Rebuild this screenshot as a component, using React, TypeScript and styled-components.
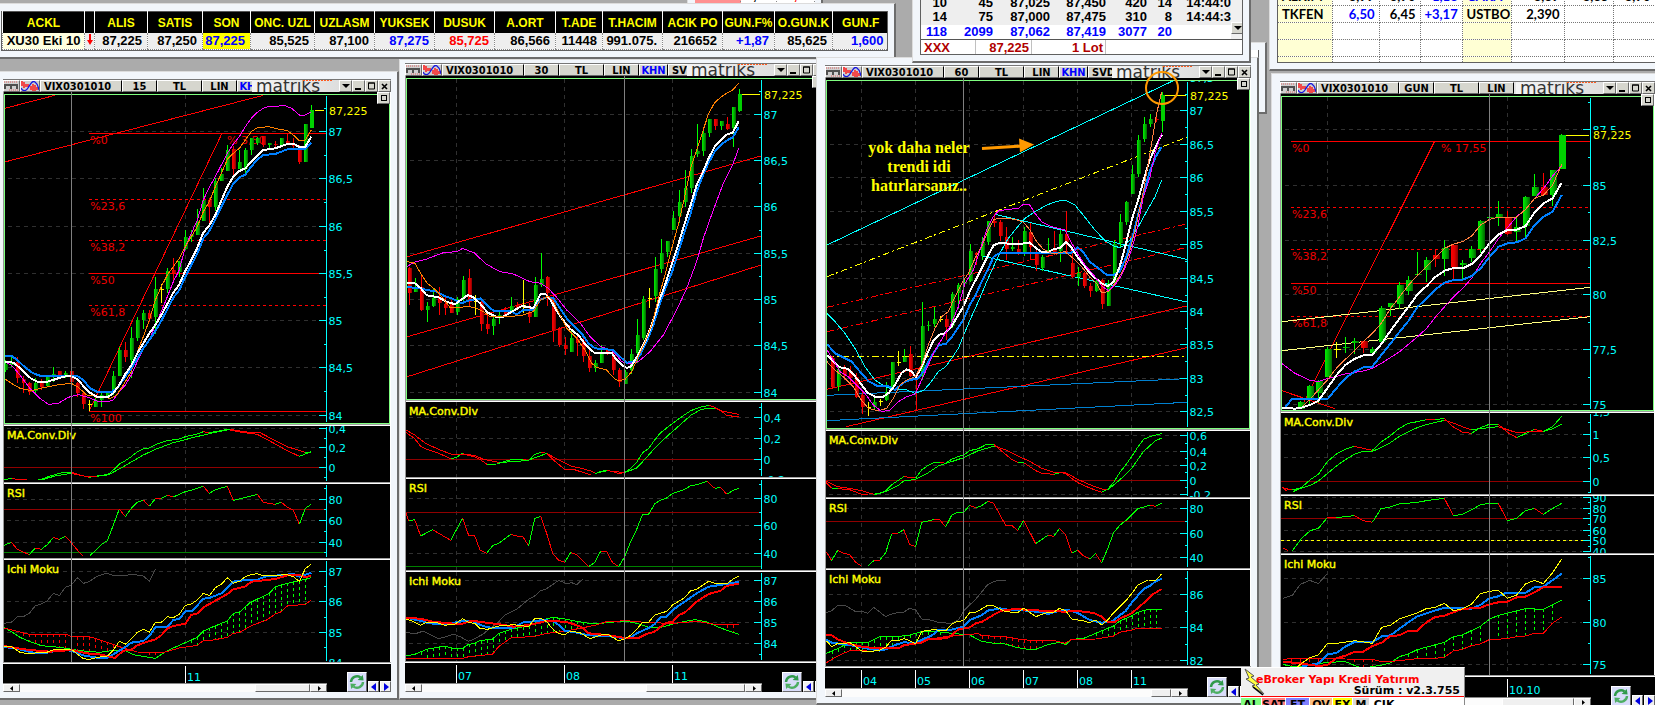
import React from "react";
import styled, { createGlobalStyle, css } from "styled-components";

/* ------------------------------------------------------------------ */
/* Theme values                                                        */
/* ------------------------------------------------------------------ */

const UI_FONT = '"DejaVu Sans Condensed", "DejaVu Sans", sans-serif';
const CHART_FONT = '"DejaVu Sans", sans-serif';
const GRID_FONT = '"Liberation Sans", Arial, sans-serif';

const C = {
  frame: "#f2f6fb",
  desktop: "#ababab",
  up: "#00ff00",
  down: "#ff0000",
  axis: "#00ffff",
  flat: "#ffff00",
};

const GlobalStyle = createGlobalStyle`
  * { box-sizing: border-box; }
  body { margin: 0; background: ${C.desktop}; font-family: ${UI_FONT}; }
`;

/* ------------------------------------------------------------------ */
/* Desktop and windows                                                 */
/* ------------------------------------------------------------------ */

const Desktop = styled.main`
  position: relative;
  min-height: 100vh;
  height: 100vh;
  overflow: hidden;
  background: ${C.desktop};
`;

const Win = styled.section<{ $x: number; $y: number; $w: number; $z: number; $pl?: number; $pt?: number }>`
  position: absolute;
  left: ${(p) => p.$x}px;
  top: ${(p) => p.$y}px;
  width: ${(p) => p.$w}px;
  z-index: ${(p) => p.$z};
  padding: ${(p) => p.$pt ?? 7}px 6px 6px ${(p) => p.$pl ?? 7}px;
  background: ${C.frame};
  border-style: solid;
  border-width: 1px 2px 2px 1px;
  border-color: #dcdcdc #6c6c6c #6c6c6c #dcdcdc;
`;

const Well = styled.div<{ $h?: number }>`
  overflow: hidden;
  height: ${(p) => (p.$h ? `${p.$h}px` : "auto")};
  border: solid #606060;
  border-width: 0 1px 1px 1px;
  background: #fff;
`;

/* ------------------------------------------------------------------ */
/* Price tables                                                        */
/* ------------------------------------------------------------------ */

const TickerTable = styled.table`
  width: 100%;
  table-layout: fixed;
  border-collapse: collapse;
  font-family: ${GRID_FONT};
  font-weight: bold;
  border-top: 1px solid #555;
`;

const TickerHead = styled.th`
  height: 21px;
  padding: 1px 0 0;
  overflow: hidden;
  white-space: nowrap;
  font-size: 12px;
  line-height: 20px;
  color: #ffff00;
  background: #000;
  border-left: 1px solid #fff;
`;

const TickerCell = styled.td<{ $color?: string; $bg?: string; $name?: boolean }>`
  height: 16px;
  padding: 0 ${(p) => (p.$name ? 0 : 5)}px 0 0;
  overflow: hidden;
  white-space: nowrap;
  text-align: ${(p) => (p.$name ? "center" : "right")};
  font-size: 13px;
  line-height: 15px;
  color: ${(p) => p.$color || "#000"};
  background: ${(p) => p.$bg || "#eeeeee"};
  border-left: 1px dotted #888;
  border-bottom: 1px dotted #888;
`;

const TICKER = [
  { h: "ACKL", v: "XU30 Eki 10", w: 82, bg: "#ffffe0", name: true },
  { h: "", v: "", w: 10, arrow: true, name: true },
  { h: "ALIS", v: "87,225", w: 53 },
  { h: "SATIS", v: "87,250", w: 55 },
  { h: "SON", v: "87,225", w: 48, color: "#0000ff", bg: "#ffff00" },
  { h: "ONC. UZL", v: "85,525", w: 64 },
  { h: "UZLASM", v: "87,100", w: 60 },
  { h: "YUKSEK", v: "87,275", w: 60, color: "#0000ff" },
  { h: "DUSUK", v: "85,725", w: 60, color: "#ff0000" },
  { h: "A.ORT", v: "86,566", w: 61 },
  { h: "T.ADE", v: "11448", w: 47 },
  { h: "T.HACIM", v: "991.075.", w: 60 },
  { h: "ACIK PO", v: "216652", w: 60 },
  { h: "GUN.F%", v: "+1,87", w: 52, color: "#0000ff" },
  { h: "O.GUN.K", v: "85,625", w: 58 },
  { h: "GUN.F", v: "1,600", w: 56, color: "#0000ff" },
];

const DownArrow = () => (
  <svg width="8" height="11" viewBox="0 0 8 11" aria-label="down">
    <path d="M3 0h2v6h2l-3 5-3-5h2z" fill="#ff0000" />
  </svg>
);

const DepthTable = styled.table`
  width: 100%;
  table-layout: fixed;
  border-collapse: collapse;
  font: bold 13px/14px ${GRID_FONT};
`;

const DepthRow = styled.tr<{ $total?: boolean }>`
  height: 14px;
  color: ${(p) => (p.$total ? "#0000ff" : "#000")};
  background: ${(p) => (p.$total ? "#fff" : "#eeeeee")};
`;

const DepthCell = styled.td`
  padding: 0;
  overflow: hidden;
  white-space: nowrap;
  text-align: right;
`;

const DepthBody = styled.div`
  display: flex;
  height: 43px;
`;

const DepthScroll = styled.div`
  display: flex;
  align-items: flex-end;
  flex: 0 0 12px;
  padding-bottom: 5px;
  background: #f0f0f0;
`;

const DepthFoot = styled.div`
  display: grid;
  grid-template-columns: 55px 56px 74px 1fr;
  border-top: 1px solid #555;
  height: 15px;
  font: bold 13px/15px ${GRID_FONT};
  color: #b00000;
`;

const DepthFootCell = styled.span<{ $align?: string }>`
  padding: 0 2px 0 3px;
  text-align: ${(p) => p.$align || "left"};
  border-right: 1px solid #c0c0c0;
`;

const DEPTH = [
  ["10", "45", "87,025", "87,450", "420", "14", "14:44:0"],
  ["14", "75", "87,000", "87,475", "310", "8", "14:44:3"],
  ["118", "2099", "87,062", "87,419", "3077", "20", ""],
];
const DEPTH_COLS = [26, 46, 57, 56, 41, 25, 59];

const QuoteTable = styled.table`
  width: 377px;
  table-layout: fixed;
  border-collapse: collapse;
  font: bold 13px/15px Lato, "Open Sans", sans-serif;
`;

const QuoteCell = styled.td<{ $color?: string; $name?: boolean }>`
  height: 17px;
  padding: 1px ${(p) => (p.$name ? 0 : 4)}px 0 4px;
  overflow: hidden;
  white-space: nowrap;
  text-align: ${(p) => (p.$name ? "left" : "right")};
  color: ${(p) => p.$color || "#000"};
  background: ${(p) => (p.$name ? "#ffffd4" : "#fff")};
  border-right: 1px dotted #777;
  border-bottom: 1px dotted #777;
`;

const QUOTES = [
  ["ALKIM", "6,99", "6,90", "+1,18", "GARA", "8,89", "8,85", "8,90"],
  ["TKFEN", "6,50", "6,45", "+3,17", "USTBO", "2,390", "", ""],
  ["", "", "", "", "", "", "", ""],
  ["", "", "", "", "", "", "", ""],
  ["", "", "", "", "", "", "", ""],
];
const QUOTE_COLS = [54, 47, 41, 42, 49, 53, 49, 42];
const quoteColor = (r: number, c: number) =>
  c === 3 || (r === 0 && c === 4) || (r === 1 && c === 1) ? "#0000ff" : "#000";

const SymbolStrip = styled.div`
  display: grid;
  grid-template-columns: 46px 36px 1fr;
  height: 15px;
  font: bold 13px/15px ${GRID_FONT};
  background: #fff;
  text-align: center;
`;

const SymbolCell = styled.span<{ $bg?: string; $color?: string }>`
  background: ${(p) => p.$bg || "#fff"};
  color: ${(p) => p.$color || "#000"};
  border-right: 1px dotted #888;
`;

/* ------------------------------------------------------------------ */
/* Chart window furniture                                              */
/* ------------------------------------------------------------------ */

const raised = css`
  background: #d6d6ce;
  border-style: solid;
  border-width: 1px;
  border-color: #fff #6a6a6a #6a6a6a #fff;
`;

const TitleBar = styled.header`
  display: flex;
  height: 13px;
  border-top: 1px solid #777;
  background: #e4e4e4;
`;

const Tabs = styled.nav`
  display: flex;
  flex: 1 1 0;
  min-width: 0;
  overflow: hidden;
`;

const Tab = styled.button<{ $w: number; $blue?: boolean; $left?: boolean }>`
  ${raised}
  border-right-color: #000;
  flex: 0 0 ${(p) => p.$w}px;
  padding: 0 ${(p) => (p.$left ? 3 : 0)}px;
  overflow: hidden;
  white-space: nowrap;
  text-align: ${(p) => (p.$left ? "left" : "center")};
  font: bold 11px/11px ${UI_FONT};
  color: ${(p) => (p.$blue ? "#0000ff" : "#000")};
`;

const IconTab = styled.button<{ $w: number }>`
  ${raised}
  flex: 0 0 ${(p) => p.$w}px;
  display: flex;
  justify-content: center;
  padding: 0;
  overflow: hidden;
`;

const Logo = styled.div`
  position: relative;
  flex: 0 0 87px;
  height: 12px;
  padding-left: 4px;
  overflow: hidden;
  background: linear-gradient(90deg, #f4f4f4, #dedede);
  font: 17px/12px "DejaVu Sans", sans-serif;
  color: #333;
  white-space: nowrap;

  &::before {
    content: "";
    position: absolute;
    top: 0;
    left: 51px;
    width: 30px;
    height: 1px;
    background: repeating-linear-gradient(90deg, #ff5a1e 0 2px, transparent 2px 3px);
  }
`;

const SysButton = styled.button`
  ${raised}
  flex: 0 0 auto;
  width: 13px;
  height: 12px;
  display: flex;
  align-items: center;
  justify-content: center;
  padding: 0;
`;

const CornerButton = styled(SysButton)`
  position: absolute;
  top: 0;
  right: 0;
  z-index: 2;
`;

const Stack = styled.div`
  position: relative;
  padding-top: 2px;
  background: #000;
  border-left: 1px solid #999;
  border-right: 1px solid #fff;
`;

const Crosshair = styled.div<{ $x: number }>`
  position: absolute;
  top: 0;
  bottom: 0;
  left: ${(p) => p.$x}px;
  width: 1px;
  background: #808080;
`;

const MainPanel = styled.div`
  border: 1px solid #80ff80;
  overflow: hidden;
`;

const SubPanel = styled.figure`
  margin: 0;
  border-top: 1px solid #a0a0a0;
  overflow: hidden;

  &::before {
    content: "";
    display: block;
    height: 1px;
    background: #fff;
  }
`;

const Footer = styled.footer<{ $h: number }>`
  display: flex;
  justify-content: space-between;
  align-items: flex-end;
  height: ${(p) => p.$h}px;
  overflow: hidden;
  background: #000;
`;

const FooterRule = styled.div`
  height: 2px;
  background: #fff;
  border-top: 1px solid #a0a0a0;
`;

const TimeColumn = styled.div<{ $w: number }>`
  width: ${(p) => p.$w}px;
  height: 100%;
`;

const ScrollTrack = styled.div`
  display: flex;
  height: 9px;
  background: #fcfcfc;
  border-top: 1px solid #888;
`;

const ScrollButton = styled.button`
  ${raised}
  flex: 0 0 17px;
  background: #f0f0f0;
  padding: 0;
  display: flex;
  align-items: center;
  justify-content: center;
`;

const Thumb = styled.div<{ $w: number }>`
  ${raised}
  background: #f0f0f0;
  width: ${(p) => p.$w}px;
  margin-left: auto;
`;

const NavButtons = styled.div`
  display: flex;
  align-items: flex-end;
  gap: 1px;
`;

const RefreshButton = styled.button`
  ${raised}
  width: 20px;
  height: 20px;
  padding: 0;
  display: flex;
  align-items: center;
  justify-content: center;
  background: #d8dcfa;
`;

const StepButton = styled.button`
  ${raised}
  width: 11px;
  height: 11px;
  padding: 0;
  display: flex;
  align-items: center;
  justify-content: center;
  background: #f0f0f0;
`;

const Plot = styled.svg`
  display: block;
  shape-rendering: crispEdges;
`;

const HiddenDefs = styled.svg`
  position: absolute;
`;

const AxisText = styled.text<{ $c?: string }>`
  font: 11px ${CHART_FONT};
  fill: ${(p) => p.$c || C.axis};
`;

const TitleText = styled.text`
  font: 11px ${CHART_FONT};
  fill: #ffff00;
  stroke: #ffff00;
  stroke-width: 0.4px;
`;

const Tri = ({ d, color = "#000" }: { d: "l" | "r" | "d"; color?: string }) => {
  const path = { l: "M6 0v8L1 4z", r: "M2 0v8l5-4z", d: "M0 2h8L4 6z" }[d];
  return (
    <svg width="8" height="8" viewBox="0 0 8 8">
      <path d={path} fill={color} />
    </svg>
  );
};

const SmallTri = ({ d }: { d: "l" | "r" }) => (
  <svg width="4" height="5" viewBox="0 0 4 5">
    <path d={d === "l" ? "M3 0v5L0 2.5z" : "M1 0v5l3-2.5z"} fill="#000" />
  </svg>
);

const MIcon = () => (
  <svg width="15" height="10" viewBox="0 0 15 10">
    <rect width="15" height="10" fill="#cfcfcf" />
    <path d="M1 8V4h12v4M7 4v4" fill="none" stroke="#505050" strokeWidth="2" />
    <path d="M0 1h14" stroke="#e06060" strokeDasharray="1 1" />
    <path d="M5 9h9" stroke="#e06060" strokeDasharray="1 1" />
  </svg>
);

const WaveIcon = () => (
  <svg width="18" height="11" viewBox="0 0 18 11">
    <rect width="18" height="11" fill="#cfcfcf" />
    <path d="M1 0v5M3 1v6M5 3v3M7 3v3M10 5v4M12 3v8M14 4v6M16 6v3" stroke="#ff1010" strokeWidth="1.4" />
    <path d="M0 7c2 4 5 3 7 0s4-8 7-6 3 5 4 8" fill="none" stroke="#1414e0" strokeWidth="1.3" />
  </svg>
);

const RefreshIcon = () => (
  <svg width="16" height="16" viewBox="0 0 16 16">
    <path d="M2 8a6 6 0 0 1 9.5-4.6" fill="none" stroke="#2f9a4a" strokeWidth="2.4" />
    <path d="M8.600 6l6 .4-.8-5.400z" fill="#2f9a4a" />
    <path d="M14 8a6 6 0 0 1-9.5 4.6" fill="none" stroke="#4cae62" strokeWidth="2.4" />
    <path d="M7.400 10l-6-.4.8 5.400z" fill="#4cae62" />
  </svg>
);

/* ------------------------------------------------------------------ */
/* Chart model. Series are stored three units to the pixel.            */
/* ------------------------------------------------------------------ */

type Pt = [number, number];
const K = 3;
const parse = (s: string): Pt[] =>
  s
    .trim()
    .split(/\s+/)
    .map((t) => t.split(",").map(Number) as Pt);

const path = (s: string) => "M" + parse(s).map(([x, y]) => `${x / K},${y / K}`).join("L");

const Curve = ({ d, c, w = 1, dash }: { d: string; c: string; w?: number; dash?: string }) => (
  <path d={path(d)} fill="none" stroke={c} strokeWidth={w} strokeDasharray={dash} strokeLinejoin="round" />
);

/* Two-colour line: "g" and "r" switch the pen, "/" lifts it. */
const Trace = ({ d }: { d: string }) => {
  const runs: { c: string; pts: string[] }[] = [];
  let color = C.up;
  let last = "";
  let run: { c: string; pts: string[] } | null = null;
  for (const t of d.trim().split(/\s+/)) {
    if (t === "/") {
      last = "";
      run = null;
    } else if (t === "g" || t === "r") {
      color = t === "g" ? C.up : C.down;
      run = null;
    } else {
      if (!run) {
        run = { c: color, pts: last ? [last] : [] };
        runs.push(run);
      }
      run.pts.push(t);
      last = t;
    }
  }
  return (
    <>
      {runs.map((r, i) => (
        <Curve key={i} d={r.pts.join(" ")} c={r.c} />
      ))}
    </>
  );
};

const valueAt = (pts: Pt[], x: number) => {
  for (let i = 1; i < pts.length; i++) {
    const [x0, y0] = pts[i - 1];
    const [x1, y1] = pts[i];
    if (x >= x0 && x <= x1) return y0 + ((y1 - y0) * (x - x0)) / (x1 - x0);
  }
  return NaN;
};

const Cloud = ({ a, b, end, step }: { a: string; b: string; end: number; step: number }) => {
  const pa = parse(a);
  const pb = parse(b);
  const bars: React.ReactNode[] = [];
  for (let x = end - step; x > pa[0][0]; x -= step) {
    const ya = valueAt(pa, x);
    const yb = valueAt(pb, x);
    if (Math.abs(ya - yb) > 14) {
      bars.push(
        <path
          key={x}
          d={`M${Math.round(x / K) + 0.5},${Math.min(ya, yb) / K}V${Math.max(ya, yb) / K}`}
          stroke={ya < yb ? C.up : C.down}
          strokeDasharray="3 3"
        />
      );
    }
  }
  return (
    <>
      {bars}
      <Curve d={a} c={C.up} />
      <Curve d={b} c={C.down} />
    </>
  );
};

/* One candle per entry: high,top,bottom,low,kind - newest first. */
const Candles = ({ d, end, step, w }: { d: string; end: number; step: number; w: number }) => (
  <>
    {d
      .trim()
      .split(/\s+/)
      .map((t, i) => {
        const [h, a, b, l, k] = t.split(",");
        const x = Math.round((end - i * step) / K);
        const wick = k === "r" ? C.down : k === "y" ? C.flat : C.up;
        const top = Math.round(+a / K);
        const height = Math.max(1, Math.round(+b / K) - top);
        const fill = i === 0 ? "#00d000" : k === "r" ? "url(#down)" : k === "y" ? C.flat : "url(#up)";
        return (
          <g key={i}>
            <path d={`M${x + 0.5},${+h / K}V${+l / K}`} stroke={wick} />
            <rect x={x - Math.floor(w / 2) + 1} y={top} width={w} height={height} fill={fill} />
          </g>
        );
      })}
  </>
);

const Gradients = () => (
  <defs>
    <linearGradient id="up">
      <stop offset="0" stopColor="#00f000" />
      <stop offset="0.5" stopColor="#00b400" />
      <stop offset="1" stopColor="#006400" />
    </linearGradient>
    <linearGradient id="down">
      <stop offset="0" stopColor="#ff0000" />
      <stop offset="0.5" stopColor="#e00000" />
      <stop offset="1" stopColor="#880000" />
    </linearGradient>
  </defs>
);

interface Scale {
  major: [number, string][];
  minor?: number[];
}

interface PlotProps {
  x: number;
  y: number;
  w: number;
  h: number;
  axis: number;
  cols: number[];
  scale: Scale;
  title?: string;
  children?: React.ReactNode;
}

const Panel = ({ x, y, w, h, axis, cols, scale, title, children }: PlotProps) => {
  const ax = Math.round(axis / K) + 0.5;
  const snap = (v: number) => Math.round(v / K) + 0.5;
  return (
    <Plot width={w} height={h} viewBox={`${x} ${y} ${w} ${h}`} role="img" aria-label={title || "Price"}>
      <g stroke="#303030" strokeDasharray="4 4">
        {scale.major.map(([v]) => (
          <path key={v} d={`M${x + 3},${snap(v)}H${ax - 9}`} />
        ))}
        {cols.map((c) => (
          <path key={c} d={`M${snap(c)},${y}V${y + h}`} />
        ))}
      </g>
      {children}
      <g stroke={C.axis}>
        <path d={`M${ax},${y + 1}V${y + h - 1}`} />
        {scale.major.map(([v]) => (
          <path key={v} d={`M${ax - 8},${snap(v)}H${ax}`} />
        ))}
        {(scale.minor || []).map((v) => (
          <path key={v} d={`M${ax - 3},${snap(v)}H${ax}`} />
        ))}
      </g>
      {scale.major.map(([v, t]) => (
        <AxisText key={v} x={ax + 2} y={Math.round(v / K) + 5}>
          {t}
        </AxisText>
      ))}
      {title && (
        <TitleText x={x + 3} y={y + 13}>
          {title}
        </TitleText>
      )}
    </Plot>
  );
};

const Level = ({ y, from, to, c, dash, w = 1 }: { y: number; from: number; to: number; c: string; dash?: string; w?: number }) => (
  <path
    d={`M${from / K},${Math.round(y / K) + (w === 1 ? 0.5 : 0)}H${to / K}`}
    stroke={c}
    strokeWidth={w}
    strokeDasharray={dash}
  />
);

const LastPrice = ({ y, from, axis }: { y: number; from: number; axis: number }) => (
  <Level y={y} from={from} to={axis - 6} c={C.flat} />
);

const PriceTag = ({ x, y }: { x: number; y: number }) => (
  <AxisText x={Math.round(x / K) + 3} y={Math.round(y / K) + 5} $c="#ffff00">
    87,225
  </AxisText>
);

const Fib = ({ x, to, levels }: { x: number; to: number; levels: [number, string, boolean][] }) => (
  <>
    {levels.map(([y, t, dashed]) => (
      <g key={t}>
        <Level y={y} from={x} to={to} c={C.down} dash={dashed ? "3 3" : undefined} />
        <AxisText x={x / K + 1} y={Math.round(y / K) + 11} $c="#f00000">
          {t}
        </AxisText>
      </g>
    ))}
  </>
);

const mids = (a: [number, string][]) => a.slice(1).map(([v], i) => (v + a[i][0]) / 2);

/* ------------------------------------------------------------------ */
/* Chart window                                                        */
/* ------------------------------------------------------------------ */

interface Mark {
  x: number;
  t: string;
}

interface ChartWindowProps {
  x: number;
  y: number;
  w: number;
  z: number;
  pl?: number;
  pt?: number;
  tabs: string[];
  crosshair: number;
  timeW: number;
  timeX: number;
  marks: Mark[];
  thumb: number;
  footH: number;
  main: React.ReactNode;
  subs: React.ReactNode[];
}

const TAB_W = [82, 35, 45, 35, 29, 40];

const ChartWindow = (p: ChartWindowProps) => (
  <Win $x={p.x} $y={p.y} $w={p.w} $z={p.z} $pl={p.pl} $pt={p.pt} aria-label={`VIX0301010 ${p.tabs[0]}`}>
    <TitleBar>
      <Tabs>
        <IconTab $w={17} aria-label="Menu">
          <MIcon />
        </IconTab>
        <IconTab $w={20} aria-label="Indicators">
          <WaveIcon />
        </IconTab>
        {["VIX0301010", ...p.tabs].map((t, i) => (
          <Tab key={t} $w={TAB_W[i]} $left={i === 0 || t === "SVD"} $blue={t === "KHN"}>
            {t}
          </Tab>
        ))}
      </Tabs>
      <Logo>matriks</Logo>
      <SysButton aria-label="Options">
        <Tri d="d" />
      </SysButton>
      <SysButton aria-label="Minimise">
        <svg width="7" height="7">
          <rect y="5" width="6" height="2" />
        </svg>
      </SysButton>
      <SysButton aria-label="Maximise">
        <svg width="7" height="8">
          <path d="M.5 1v6h6V1zM0 1h7" fill="none" stroke="#000" />
        </svg>
      </SysButton>
      <SysButton aria-label="Close">
        <svg width="7" height="7">
          <path d="M1 1l5 5M6 1L1 6" stroke="#000" strokeWidth="1.6" />
        </svg>
      </SysButton>
    </TitleBar>
    <Stack>
      <CornerButton aria-label="Restore panel">
        <svg width="6" height="6">
          <rect x="0.5" y="0.5" width="5" height="5" fill="none" stroke="#000" />
        </svg>
      </CornerButton>
      <MainPanel>{p.main}</MainPanel>
      {p.subs.map((s, i) => (
        <SubPanel key={i}>{s}</SubPanel>
      ))}
      <Crosshair $x={p.crosshair} />
    </Stack>
    <FooterRule />
    <Footer $h={p.footH}>
      <TimeColumn $w={p.timeW}>
        <Plot width={p.timeW} height={p.footH - 9} viewBox={`${p.timeX} 0 ${p.timeW} ${p.footH - 9}`}>
          {p.marks.map((m) => (
            <g key={m.t}>
              <path d={`M${Math.round(m.x / K) + 0.5},2V40`} stroke="#fff" />
              <AxisText x={Math.round(m.x / K) + 2} y={17}>
                {m.t}
              </AxisText>
            </g>
          ))}
        </Plot>
        <ScrollTrack>
          <ScrollButton aria-label="Scroll left">
            <SmallTri d="l" />
          </ScrollButton>
          <Thumb $w={p.thumb} />
          <ScrollButton aria-label="Scroll right">
            <SmallTri d="r" />
          </ScrollButton>
        </ScrollTrack>
      </TimeColumn>
      <NavButtons>
        <RefreshButton aria-label="Refresh">
          <RefreshIcon />
        </RefreshButton>
        <StepButton aria-label="Previous">
          <Tri d="l" color="#0000e0" />
        </StepButton>
        <StepButton aria-label="Next">
          <Tri d="r" color="#0000e0" />
        </StepButton>
      </NavButtons>
    </Footer>
  </Win>
);

/* ------------------------------------------------------------------ */
/* 15 minute chart                                                     */
/* ------------------------------------------------------------------ */

const SCALE_15: [number, string][] = [
  [184, "87"], [325, "86,5"], [467, "86"], [610, "85,5"], [751, "85"], [892, "84,5"], [1034, "84"],
];

const Price15 = () => (
  <Panel x={5} y={25} w={384} h={328} axis={978} cols={[556]} scale={{ major: SCALE_15, minor: [114, ...mids(SCALE_15)] }}>
    <Curve d="14,115 165,76" c={C.down} />
    <Curve d="14,276 790,76" c={C.down} />
    <Fib
      x={268}
      to={978}
      levels={[
        [190, "%0", false], [386, "%23,6", true], [509, "%38,2", true],
        [608, "%50", false], [704, "%61,8", true], [1022, "%100", false],
      ]}
    />
    <Curve d="268,1022 666,190" c={C.down} />
    <AxisText x={227} y={74} $c="#f00000">% 3,50</AxisText>
    <Candles
      end={934}
      step={18}
      w={4}
      d="105,120,175,175,g 162,162,275,275,g 226,230,276,282,r 205,225,228,235,r 190,214,220,222,r 205,205,224,224,g
        212,222,226,230,r 218,220,224,236,g 198,198,226,230,r 200,203,218,225,g 203,205,240,255,g 235,240,297,312,g
        240,276,296,296,g 228,238,298,318,r 225,240,302,302,g 293,312,334,334,g 325,333,410,422,g 385,390,412,460,r
        354,390,452,452,g 417,452,495,495,g 480,492,500,515,g 480,502,537,540,g 572,574,606,620,g 565,600,610,630,r
        595,602,657,670,g 642,656,660,700,y 620,657,741,792,g 720,730,748,755,r 720,729,750,776,g 742,750,804,812,g
        770,804,870,924,g 815,840,862,875,r 832,840,918,918,g 903,918,968,975,g 962,970,984,984,g 968,975,990,1010,g
        985,990,1010,1010,g 990,1002,1004,1022,y 965,968,1003,1016,r 935,940,970,980,r 903,904,935,940,r 904,908,914,925,g
        903,904,918,920,r 892,912,920,937,g 915,920,947,950,g 928,935,950,960,r 925,940,962,973,g 935,940,965,974,r
        918,926,940,968,r 862,876,924,940,r 862,878,884,892,g 870,882,900,905,g"
    />
    <Curve
      c="#ff00ff"
      d="12,875 34,885 60,915 90,955 120,985 145,1003 175,1000 205,982 235,974 265,982 290,993 320,996 340,990 358,965
        376,945 394,915 412,875 430,835 448,810 466,765 484,725 502,680 520,635 538,600 556,530 574,490 592,450 610,390
        628,352 646,320 664,285 682,250 700,222 718,200 736,170 754,145 772,127 790,115 805,109 830,110 850,105 875,115
        898,135 916,135 934,125"
    />
    <Curve
      c="#ff8000"
      d="12,925 34,940 60,955 95,962 120,955 145,950 175,944 214,940 235,952 260,975 295,980 330,985 350,975 370,945
        394,905 412,845 430,800 448,750 466,690 484,650 502,615 520,590 538,565 556,530 574,500 592,470 610,425 628,395
        646,350 664,310 682,268 700,250 718,235 736,210 754,185 772,173 805,170 835,177 862,182 880,195 898,212 916,210 934,180"
    />
    <Curve
      c="#0080ff"
      w={2}
      d="12,857 35,858 52,870 75,892 100,910 120,917 232,918 250,930 270,955 295,967 335,967 355,950 376,920 394,895
        412,865 430,835 448,810 466,783 484,752 502,718 520,683 538,660 556,620 574,585 592,550 610,505 628,483 646,448
        664,410 682,375 700,340 718,322 736,314 754,290 772,268 790,255 826,252 862,238 916,237 934,218"
    />
    <Curve
      c="#ffffff"
      w={2}
      d="12,875 40,878 55,890 75,910 95,927 115,936 140,936 165,928 190,920 214,918 232,928 250,948 270,968 290,980
        322,982 340,970 358,944 376,912 394,886 412,850 430,820 448,790 466,765 484,735 502,702 520,668 538,643 556,602
        574,570 592,533 610,488 628,466 646,435 664,392 682,350 700,320 718,303 736,295 754,275 772,256 790,240 826,235
        862,222 880,221 898,231 916,230 934,200"
    />
    <LastPrice y={121} from={944} axis={978} />
    <PriceTag x={978} y={121} />
  </Panel>
);

const Macd15 = () => (
  <Panel x={4} y={6} w={386} h={56} axis={978} cols={[556]} title="MA.Conv.Div"
    scale={{ major: [[25, "0,4"], [82, "0,2"], [142, "0"]], minor: [54, 112, 172] }}>
    <Level y={142} from={12} to={978} c="#900000" />
    <Trace d="r 12,178 g 20,178 35,175 r 48,178 80,178 / g 115,178 125,178 150,168 190,157 214,157 r 240,165 268,172 g 290,168
      322,165 340,150 358,132 376,122 394,110 412,95 430,86 448,84 466,74 500,62 538,57 556,50 592,42 610,35 r 628,38 g
      646,35 682,28 r 720,36 772,43 826,72 862,92 898,109 g 916,102 934,95" />
    <Trace d="g 130,178 165,168 214,160 r 250,168 290,169 g 330,162 370,140 430,105 466,88 520,68 590,50 650,36 690,28 r
      740,36 780,38 826,62 862,80 916,97 g 934,96" />
  </Panel>
);

const Rsi15 = () => (
  <Panel x={4} y={64} w={386} h={74} axis={978} cols={[556]} title="RSI"
    scale={{ major: [[236, "80"], [301, "60"], [365, "40"]], minor: [203, 268, 333, 397] }}>
    <Level y={268} from={12} to={978} c="#900000" />
    <Level y={397} from={12} to={978} c="#008000" />
    <Trace d="g 12,376 34,367 r 52,388 88,404 g 106,384 r 124,388 g 142,374 160,352 r 178,358 g 196,349 r 214,368 232,390
      248,407 / g 270,407 304,374 322,362 340,315 358,267 r 376,290 g 394,265 412,247 430,240 r 448,259 g 466,236 r
      484,235 g 502,226 r 520,231 g 556,215 574,211 610,199 r 628,220 g 646,209 682,199 r 700,241 g 772,223 r 790,247
      826,253 g 844,247 r 862,262 880,270 898,313 g 916,265 934,253" />
  </Panel>
);

const Ichi15 = () => (
  <Panel x={4} y={140} w={386} h={102} axis={978} cols={[556]} title="Ichi Moku"
    scale={{ major: [[454, "87"], [544, "86"], [637, "85"], [727, "84"]], minor: [499, 592, 682] }}>
    <Curve c="#484848" d="12,610 34,607 52,590 70,590 88,580 106,557 124,552 142,542 160,520 178,527 196,502 214,495
      232,473 250,490 268,485 290,469 320,460 345,468 376,466 400,463 430,468 448,484 466,448" />
    <Cloud end={934} step={18}
      a="12,622 34,635 60,652 90,665 124,677 180,682 240,692 300,697 340,691 376,692 400,704 466,715 502,692 538,676
        592,652 610,633 640,620 682,603 700,580 718,577 750,548 808,520 826,500 862,490 916,478 934,473"
      b="12,624 60,636 88,643 200,643 214,650 268,650 304,661 358,680 412,696 488,698 538,684 592,676 610,662 640,660
        682,652 700,640 718,638 754,617 800,600 826,582 844,575 862,558 916,553 934,540" />
    <Curve c="#0080ff" w={2} d="12,681 50,686 100,698 140,698 180,690 214,692 250,706 290,713 322,714 345,700 370,685 394,668
      430,663 448,648 466,622 502,621 520,600 538,597 556,574 578,572 610,536 628,534 664,520 682,503 700,485 730,481
      772,479 800,468 840,466 880,462 898,470 934,458" />
    <Curve c="#ff0000" w={2} d="12,678 60,686 90,690 150,695 214,690 260,700 304,704 345,714 370,692 394,689 412,676 430,669
      466,658 484,646 502,625 520,618 556,611 574,585 592,580 610,562 650,540 682,522 700,508 736,499 754,485 826,477
      862,466 898,464 916,472 934,466" />
    <Curve c="#ffff00" d="12,678 34,680 60,697 90,702 110,698 140,697 165,688 214,688 232,702 250,716 268,718 304,710
      322,708 340,690 358,664 376,673 394,657 412,637 430,628 448,637 466,607 484,607 502,590 520,593 538,583 556,556
      574,552 592,540 610,520 628,527 646,503 664,493 682,473 700,490 718,484 736,470 754,464 772,461 790,467 826,466
      862,464 880,470 898,484 916,446 934,432" />
  </Panel>
);

/* ------------------------------------------------------------------ */
/* 30 minute chart                                                     */
/* ------------------------------------------------------------------ */

const SCALE_30: [number, string][] = [
  [193, "87"], [331, "86,5"], [469, "86"], [610, "85,5"], [748, "85"], [886, "84,5"], [1025, "84"],
];
const COLS_30 = [169, 493, 817];

const Price30 = () => (
  <Panel x={7} y={29} w={417} h={320} axis={1083} cols={COLS_30} scale={{ major: SCALE_30, minor: [124, ...mids(SCALE_30)] }}>
    <Curve d="22,620 1083,318" c={C.down} />
    <Curve d="22,860 1083,558" c={C.down} />
    <Curve d="22,980 1083,645" c={C.down} />
    <Candles
      end={1016}
      step={18}
      w={4}
      d="118,133,182,185,g 170,172,233,290,g 200,222,236,240,r 212,214,227,240,g 207,208,228,240,r 207,208,248,260,g
        240,250,304,318,g 222,304,312,322,g 298,318,414,428,g 360,414,457,470,g 420,457,498,518,g 484,505,540,540,g
        573,574,607,620,g 567,608,656,670,g 620,657,738,755,g 715,745,747,773,y 738,748,864,870,g 808,856,910,940,g
        898,912,960,972,g 960,965,1002,1002,g 955,960,996,1012,r 908,915,960,975,r 895,900,910,915,r 885,905,938,940,g
        930,938,955,965,g 900,918,955,965,r 860,872,918,935,r 850,868,878,918,r 840,865,905,905,g 860,886,898,915,r
        830,838,886,890,r 735,745,842,875,r 678,680,730,768,r 608,686,705,712,g 680,705,800,800,g 760,785,800,820,r
        690,765,768,790,y 755,765,775,780,r 740,768,780,785,g 770,780,795,800,r 785,795,805,822,g 800,808,828,855,g
        795,822,838,852,r 750,755,822,842,r 735,752,756,795,y 658,685,755,770,r 678,690,745,755,g 742,748,785,795,g
        750,760,788,790,r 735,762,775,795,r 712,742,760,795,r 715,745,768,770,g 755,768,780,815,g 678,710,780,782,r
        685,712,725,725,g 650,655,728,765,r"
    />
    <Curve
      c="#ff00ff"
      d="22,650 40,637 80,627 130,608 170,605 188,595 205,602 222,608 240,625 260,643 300,665 340,672 390,695 422,700
        445,715 470,742 500,780 540,818 570,860 600,888 640,905 665,935 690,942 715,935 750,905 790,855 830,780 860,715
        890,635 910,565 940,480 970,400 998,345 1016,295"
    />
    <Curve
      c="#0080ff"
      w={2}
      d="22,711 60,715 80,720 110,725 134,738 155,745 185,760 204,752 242,745 260,765 280,782 330,783 350,793 370,780
        400,780 420,750 440,742 460,745 480,775 500,805 525,830 548,855 565,880 585,895 640,900 660,920 680,938 705,935
        722,912 740,875 760,825 780,760 800,705 818,660 836,602 854,545 872,490 890,425 908,378 926,338 944,305 962,285
        980,272 998,262 1016,232"
    />
    <Curve
      c="#ffffff"
      w={2}
      d="22,699 44,700 62,714 80,736 116,742 134,753 165,763 185,748 204,735 220,742 240,760 262,787 290,801 310,800
        330,788 365,768 400,774 412,752 422,731 436,731 450,748 470,782 490,812 512,838 535,856 560,888 584,909 635,909
        650,930 665,945 680,954 692,950 705,930 720,905 735,875 755,825 775,760 795,705 818,635 836,580 854,520 872,465
        890,405 908,368 926,325 944,290 962,270 980,254 998,248 1016,214"
    />
    <Curve
      c="#ff8000"
      d="22,635 45,640 62,670 80,698 105,718 130,745 150,773 170,773 200,770 225,772 250,785 270,800 330,800 370,795
        400,785 420,752 445,738 460,755 480,795 500,835 530,865 555,900 575,940 590,952 620,960 640,983 655,993 675,988
        695,965 715,920 735,875 755,825 775,745 795,675 818,585 836,520 854,440 872,355 890,300 908,245 926,190 944,158
        962,142 980,130 998,120 1016,100"
    />
    <LastPrice y={133} from={1026} axis={1086} />
    <PriceTag x={1083} y={133} />
  </Panel>
);

const Macd30 = () => (
  <Panel x={6} y={2} w={419} h={75} axis={1083} cols={COLS_30} title="MA.Conv.Div"
    scale={{ major: [[52, "0,4"], [115, "0,2"], [176, "0"], [238, "-0,2"]], minor: [22, 84, 145, 208] }}>
    <Level y={176} from={18} to={1083} c="#900000" />
    <Trace d="r 18,97 44,116 62,139 80,148 116,160 152,176 g 170,172 188,160 r 206,167 224,170 240,178 262,194 g 290,192
      314,184 340,178 368,178 r 386,182 g 404,163 422,157 r 440,160 458,178 476,193 494,208 520,208 548,217 572,224 / g
      586,222 602,214 622,211 r 656,220 674,218 g 692,205 710,187 728,158 746,145 764,120 782,98 800,84 818,70 854,44
      872,32 900,22 926,16 r 944,22 962,32 980,46 1016,51" />
    <Trace d="r 18,90 44,105 80,132 116,148 152,162 188,163 224,166 250,178 296,187 g 350,185 386,180 420,168 440,160 r
      476,180 512,198 548,206 572,213 586,220 g 622,212 r 674,218 g 710,204 728,185 764,145 800,110 840,75 872,46
      900,30 926,24 944,24 r 962,32 990,38 1016,43" />
  </Panel>
);

const Rsi30 = () => (
  <Panel x={6} y={79} w={419} h={91} axis={1083} cols={COLS_30} title="RSI"
    scale={{ major: [[293, "80"], [376, "60"], [458, "40"]], minor: [253, 335, 418] }}>
    <Level y={335} from={18} to={1083} c="#900000" />
    <Level y={499} from={18} to={1083} c="#008000" />
    <Trace d="r 18,338 26,363 g 44,359 r 62,408 g 98,389 r 152,421 g 188,355 r 206,406 224,407 240,450 260,460 g 278,437
      296,430 332,403 r 350,408 368,409 386,438 g 404,356 422,349 r 440,400 458,460 476,481 494,487 g 512,457 r 530,464
      566,500 g 584,487 602,454 r 620,455 638,488 656,500 g 674,470 692,425 710,388 728,342 746,342 764,312 782,300
      800,294 818,280 854,268 872,257 890,254 922,244 r 944,265 g 962,262 r 980,283 g 998,272 1016,265" />
  </Panel>
);

const Ichi30 = () => (
  <Panel x={6} y={172} w={419} h={89} axis={1083} cols={COLS_30} title="Ichi Moku"
    scale={{ major: [[541, "87"], [604, "86"], [667, "85"], [730, "84"]], minor: [573, 635, 698, 763] }}>
    <Curve c="#484848" d="18,696 44,702 70,693 98,708 116,716 140,710 160,702 180,710 206,724 224,716 250,702 270,685
      290,672 314,645 350,628 386,598 404,588 422,572 440,566 476,541 500,551 515,548 530,554 548,538" />
    <Cloud end={1016} step={18}
      a="18,768 44,763 80,748 134,738 160,745 188,745 206,733 224,730 240,722 278,717 296,700 332,688 386,677 422,661
        458,652 494,657 530,664 566,670 602,670 674,663 710,670 746,682 782,682 820,672 850,665 885,659 920,666 962,684
        1016,703"
      b="18,775 188,775 206,770 240,767 278,762 296,740 332,714 404,709 440,700 494,694 540,685 584,676 620,665
        680,662 746,668 818,670 890,664 944,673 1016,674" />
    <Curve c="#0080ff" w={2} d="18,653 60,662 80,668 110,673 150,670 190,663 220,664 240,674 262,682 300,685 340,683
      370,667 400,664 430,660 458,663 476,675 494,692 530,698 566,706 620,708 670,714 692,712 710,700 746,684 764,672
      782,652 800,650 818,630 854,605 890,580 926,560 960,555 1016,546" />
    <Curve c="#ff0000" w={2} d="18,654 60,656 98,665 160,671 188,671 215,662 250,667 300,673 340,680 386,675 420,668
      440,662 465,664 494,665 520,672 548,683 566,700 620,705 674,714 715,714 740,702 764,695 782,680 800,668 818,666
      836,645 854,638 890,605 926,582 962,572 980,558 1016,551" />
    <Curve c="#ffff00" d="18,657 34,662 62,676 80,666 110,668 134,676 165,672 188,656 206,668 224,670 240,685 262,688
      296,678 340,674 386,680 404,656 422,654 440,665 458,687 476,701 494,704 512,693 540,698 570,716 602,705 625,704
      656,723 676,715 692,706 710,688 728,667 746,667 764,645 800,634 818,615 854,593 872,572 890,568 926,544 944,550
      980,552 998,538 1016,528" />
  </Panel>
);

/* ------------------------------------------------------------------ */
/* 60 minute chart                                                     */
/* ------------------------------------------------------------------ */

const SCALE_60: [number, string][] = [
  [82, "87,5"], [181, "87"], [283, "86,5"], [382, "86"], [484, "85,5"], [583, "85"], [683, "84,5"], [784, "84"],
  [883, "83,5"], [983, "83"], [1084, "82,5"],
];
const COLS_60 = [139, 301, 463, 625, 787, 949];
const DASH_DOT = "7 3 2 3";

const Price60 = () => (
  <Panel x={12} y={31} w={422} h={347} axis={1116} cols={COLS_60} scale={{ major: SCALE_60, minor: mids(SCALE_60) }}>
    <Curve d="36,1018 1115,768" c={C.down} />
    <Curve d="94,1130 1115,893" c={C.down} />
    <Curve d="36,1036 1115,986" c="#0080d0" />
    <Curve d="36,1112 1115,1057" c="#0080d0" />
    <Curve d="36,772 1115,522" c={C.down} dash={DASH_DOT} />
    <Curve d="36,845 1115,592" c={C.down} dash={DASH_DOT} />
    <Curve d="36,680 1115,262" c={C.flat} dash={DASH_DOT} />
    <Level y={918} from={36} to={1115} c={C.flat} dash={DASH_DOT} />
    <Curve d="36,585 1075,92" c={C.axis} />
    <Curve d="536,492 1115,628" c={C.axis} />
    <Curve d="500,618 1115,756" c={C.axis} />
    <Candles
      end={1040}
      step={18}
      w={4}
      d="125,136,212,245,g 190,207,210,215,r 192,208,222,232,g 200,222,266,276,g 255,270,372,380,g 345,373,432,432,g
        453,457,516,526,g 492,517,580,590,g 570,582,696,700,g 690,700,768,768,g 686,690,762,778,r 685,692,722,725,g
        700,708,724,740,r 665,668,708,715,r 650,668,682,708,g 610,640,680,684,r 484,552,575,610,r 540,553,602,636,g
        543,600,605,615,r 565,600,610,612,g 615,622,655,662,g 600,612,645,662,r 520,545,592,630,r 530,543,606,618,g
        570,598,610,614,r 560,592,598,604,g 530,560,596,630,r 510,515,558,572,r 492,514,518,530,r 513,514,576,586,g
        562,576,618,630,g 605,608,615,645,r 582,603,692,695,g 690,697,702,710,g 700,704,730,778,g 726,732,828,835,g
        795,806,832,870,r 798,806,808,815,y 772,806,822,830,g 812,824,828,842,g 756,828,976,990,g 970,975,980,1080,r
        888,912,978,982,r 897,920,935,937,g 903,937,940,948,y 935,937,1012,1015,g 995,1025,1050,1052,g 1048,1052,1055,1068,y
        1040,1055,1070,1080,g 1055,1070,1074,1098,y 1020,1036,1070,1092,r 968,980,1040,1045,r 948,962,985,1000,r
        945,955,975,990,r 950,956,1008,1022,g 918,925,1010,1015,r"
    />
    <Curve
      c="#00ffff"
      d="36,790 60,815 90,850 120,895 150,950 180,990 210,1010 240,1020 270,1018 300,1030 325,1022 345,1000 370,965
        392,950 410,925 430,895 446,855 465,810 490,755 515,695 540,640 560,600 580,565 600,540 630,505 660,485 690,468
        715,457 740,451 755,453 780,465 810,502 840,540 870,572 900,590 915,592 930,585 945,570 970,530 1000,475
        1020,440 1040,390"
    />
    <Curve
      c="#0080ff"
      w={2}
      d="36,882 60,910 90,925 110,935 135,965 160,993 185,1007 220,1008 240,1020 265,998 285,990 310,985 325,965
        340,935 355,910 372,885 392,882 410,862 428,835 446,808 464,765 482,735 500,695 518,660 536,620 554,609 770,608
        788,592 806,608 824,635 850,655 875,674 896,675 914,665 932,625 950,570 968,500 986,430 1004,365 1022,320
        1040,290"
    />
    <Curve
      c="#ffffff"
      w={2}
      d="38,916 60,940 75,952 100,957 115,972 140,1005 158,1028 180,1040 205,1040 222,1028 240,1005 260,968 275,958
        290,964 302,982 318,955 335,915 355,872 372,854 390,850 410,828 430,795 445,770 464,725 482,690 500,655 518,618
        536,586 554,578 600,583 630,580 644,577 660,592 680,606 698,606 716,598 734,594 752,576 770,594 788,622 806,645
        824,668 842,685 860,700 878,709 896,695 914,650 932,585 950,510 968,455 986,390 1004,330 1022,290 1040,255"
    />
    <Curve
      c="#ff8040"
      d="36,935 60,960 90,985 115,1010 135,1045 160,1075 190,1083 215,1075 235,1045 255,1005 275,990 300,980 320,945
        340,885 360,835 380,800 400,785 420,740 440,700 460,670 480,625 500,590 520,540 536,508 560,504 600,508 625,516
        645,540 665,575 685,598 715,612 750,605 775,625 800,650 825,682 845,700 860,728 880,725 900,700 925,660 945,600
        965,520 985,425 1005,310 1025,190 1040,125"
    />
    <Curve
      c="#ff00ff"
      d="36,900 55,930 75,965 100,980 130,1010 150,1030 175,1065 200,1085 225,1080 250,1055 275,1040 300,1032 320,990
        340,945 360,900 385,860 405,830 430,770 450,700 475,660 495,600 515,540 535,500 550,483 580,478 610,475 625,463
        643,463 660,490 680,515 710,530 750,540 765,570 790,615 810,645 840,680 860,708 880,722 900,705 920,675 940,630
        955,580 970,520 985,440 1005,380 1020,310 1040,250"
    />
    <LastPrice y={136} from={1050} axis={1118} />
    <PriceTag x={1116} y={136} />
  </Panel>
);

const Macd60 = () => (
  <Panel x={11} y={11} w={424} h={66} axis={1116} cols={COLS_60} title="MA.Conv.Div"
    scale={{ major: [[46, "0,6"], [92, "0,4"], [134, "0,2"], [179, "0"], [222, "-0,2"]], minor: [70, 113, 157, 201] }}>
    <Level y={179} from={34} to={1116} c="#900000" />
    <Trace d="r 34,188 50,205 g 68,206 r 104,209 140,223 158,224 / g 176,223 194,221 212,212 230,194 248,182 266,170 r
      302,174 g 320,150 338,137 356,128 376,127 r 392,130 g 410,118 428,110 446,105 464,92 490,86 515,73 536,73 r
      554,88 572,103 590,118 608,127 g 626,128 r 644,140 662,152 680,160 716,163 g 734,158 r 752,160 770,175 788,188
      824,204 860,217 g 878,208 896,187 914,158 932,135 950,110 968,82 986,58 1004,50 1040,41" />
    <Trace d="r 34,183 68,200 104,205 140,212 176,223 g 212,215 250,196 266,183 302,178 340,158 370,138 400,128 446,113
      490,92 540,78 r 572,90 608,108 644,124 680,145 716,157 752,158 788,178 824,194 860,207 878,210 g 914,180 950,145
      985,95 1020,63 1040,54" />
  </Panel>
);

const Rsi60 = () => (
  <Panel x={11} y={79} w={424} h={69} axis={1116} cols={COLS_60} title="RSI"
    scale={{ major: [[265, "80"], [338, "60"], [410, "40"]], minor: [302, 374] }}>
    <Level y={302} from={34} to={1116} c="#900000" />
    <Trace d="r 34,395 50,422 g 68,391 r 86,400 104,404 122,427 138,437 / g 160,437 176,422 r 194,421 g 212,398 230,341 r
      248,340 g 266,329 r 284,373 302,380 g 320,307 356,299 r 374,299 392,321 g 410,286 428,277 446,277 464,256 r
      482,263 g 500,257 518,244 r 536,250 572,316 590,316 608,331 g 626,301 r 662,371 g 698,346 r 716,349 g 734,325 r
      752,345 770,400 g 788,390 r 806,408 824,417 g 842,401 r 860,428 g 878,386 896,338 914,316 932,302 968,266
      1004,256 r 1022,259 g 1040,250" />
  </Panel>
);

const Ichi60 = () => (
  <Panel x={11} y={150} w={424} h={96} axis={1116} cols={COLS_60} title="Ichi Moku"
    scale={{ major: [[523, "86"], [622, "84"], [721, "82"]], minor: [473, 573, 672] }}>
    <Curve c="#484848" d="34,578 50,572 68,557 90,556 122,575 140,574 158,580 176,562 212,590 230,582 248,578 266,577
      284,565 302,570 320,597 338,598 374,608 410,610 430,600 450,568 482,538 518,494 536,485 554,480 573,482" />
    <Cloud end={1040} step={18}
      a="34,700 68,686 104,666 158,668 194,650 248,650 284,645 320,635 374,636 410,640 464,645 500,664 536,670 570,672
        608,683 640,688 662,688 698,674 734,667 752,674 770,658 806,655 842,640 878,625 896,618 914,603 950,588 968,577
        1004,567 1040,569"
      b="34,728 68,708 104,692 158,690 212,686 266,668 302,668 374,652 464,643 490,641 500,647 572,650 608,657 644,661
        716,661 750,670 770,658 842,657 896,648 914,637 950,630 968,625 1040,625" />
    <Curve c="#0080ff" w={2} d="34,659 50,668 86,673 122,678 158,686 194,692 212,688 240,675 266,667 302,669 330,655
      350,647 370,630 410,629 446,620 464,600 500,586 518,572 554,565 580,569 626,571 680,577 698,582 734,572 760,570
      788,579 824,600 860,608 890,605 914,586 932,573 950,548 986,507 1004,498 1022,484 1040,476" />
    <Curve c="#ff0000" w={2} d="34,644 50,646 68,658 104,672 140,680 176,684 250,685 266,676 320,668 340,657 395,655
      410,646 430,628 464,622 482,610 500,606 540,582 560,572 600,567 680,572 750,575 790,573 836,579 860,590 878,606
      900,606 914,596 950,580 986,549 1010,525 1040,507" />
    <Curve c="#ffff00" d="34,662 50,680 68,670 86,672 104,667 122,680 140,693 158,696 194,690 212,682 230,660 248,662
      266,656 284,662 302,672 320,634 356,629 392,633 410,612 428,604 446,602 464,578 482,577 500,567 518,556 536,557
      554,567 572,575 608,578 626,564 644,577 662,590 698,577 716,577 734,565 752,572 770,597 806,603 824,608 842,600
      860,615 878,600 896,578 914,560 932,543 950,521 968,496 1000,480 1022,481 1040,462" />
  </Panel>
);

/* ------------------------------------------------------------------ */
/* Daily chart                                                         */
/* ------------------------------------------------------------------ */

const SCALE_DAY: [number, string][] = [
  [178, "87,5"], [344, "85"], [509, "82,5"], [673, "80"], [838, "77,5"], [1003, "75"],
];

const PriceDay = () => (
  <Panel x={17} y={27} w={371} h={313} axis={975} cols={[187, 727]} scale={{ major: SCALE_DAY, minor: [96, ...mids(SCALE_DAY)] }}>
    <Fib
      x={78}
      to={975}
      levels={[
        [212, "%0", false], [412, "%23,6", true], [538, "%38,2", true], [640, "%50", false], [739, "%61,8", true],
      ]}
    />
    <AxisText x={176} y={82} $c="#f00000">% 17,55</AxisText>
    <Curve d="106,1018 510,212" c={C.down} />
    <Curve d="50,962 210,1016" c={C.down} />
    <Curve d="50,755 975,652" c="#ffff80" />
    <Curve d="50,842 975,740" c="#ffff80" />
    <Candles
      end={889}
      step={27}
      w={7}
      d="192,195,296,296,g 300,301,375,408,g 308,350,376,376,r 312,350,378,378,g 378,381,468,504,g 440,471,486,515,g
        422,441,493,495,r 393,432,440,468,g 441,441,444,444,g 450,453,537,550,g 528,537,563,576,g 570,578,585,628,g
        522,525,590,630,r 510,534,568,617,g 538,556,566,590,r 562,570,600,635,g 545,612,616,618,g 618,630,662,675,g
        636,645,702,717,g 699,700,712,738,g 708,714,815,815,g 830,837,849,849,g 812,814,835,850,r 804,814,818,852,g
        801,831,835,848,g 816,836,839,865,y 830,837,920,920,g 930,933,968,1000,g 945,948,988,1008,g 994,996,1018,1018,g"
    />
    <Curve
      c="#ff00ff"
      d="50,880 90,910 133,930 160,935 187,926 241,912 295,903 322,895 349,880 404,845 458,800 485,775 512,740 566,680
        593,655 620,625 647,580 674,545 701,505 755,440 782,418 809,385 836,355 863,318 890,287"
    />
    <Curve
      c="#ff8040"
      d="106,1015 133,990 160,960 187,930 214,895 241,868 268,843 295,815 322,790 349,760 377,715 404,680 431,645
        458,615 485,590 512,562 539,535 566,522 593,515 620,498 647,465 674,448 701,441 755,441 782,418 809,385 836,375
        863,345 890,283"
    />
    <Curve
      c="#0080ff"
      w={2}
      d="60,1013 80,988 187,988 214,955 241,925 268,905 295,892 322,890 349,855 377,820 404,785 431,752 458,710
        485,685 512,658 539,638 566,630 593,629 620,618 647,595 674,560 701,530 728,520 755,517 782,505 809,465 836,440
        863,425 890,375"
    />
    <Curve
      c="#ffffff"
      w={2}
      d="50,1013 65,1014 90,1016 110,1013 140,1003 160,992 187,955 214,916 241,885 268,867 295,856 322,854 349,822
        377,782 404,745 431,710 458,672 485,648 512,620 539,602 566,594 593,595 620,582 647,555 674,520 701,493 728,480
        755,479 782,468 809,427 836,400 863,385 890,338"
    />
    <LastPrice y={196} from={902} axis={978} />
  </Panel>
);

/* The live price label hides the axis figure beneath it. */
const TagBox = styled.div`
  position: absolute;
  top: 36px;
  right: 17px;
  width: 44px;
  height: 11px;
  background: #000;
  color: #ffff00;
  font: 11px/11px ${CHART_FONT};
`;

const MacdDay = () => (
  <Panel x={46} y={8} w={373} h={81} axis={1066} cols={[277, 817]} title="MA.Conv.Div"
    scale={{ major: [[17, "1,5"], [86, "1"], [155, "0,5"], [227, "0"]], minor: [50, 121, 190, 262] }}>
    <Level y={227} from={138} to={1066} c="#900000" />
    <Trace d="r 143,246 155,258 / g 175,260 200,247 226,224 250,208 277,170 304,147 331,133 358,124 r 385,130 412,136 g
      440,110 466,92 493,70 520,55 547,50 574,44 r 601,44 g 628,40 r 655,66 682,81 709,85 g 736,68 763,58 790,58 r
      817,82 845,98 g 871,86 898,73 r 925,79 g 952,66 980,34" />
    <Trace d="r 143,250 172,254 g 200,249 226,241 250,228 277,206 304,183 331,164 358,148 385,139 412,139 440,127 466,113
      493,94 520,80 547,68 574,59 628,46 r 655,54 682,65 709,74 g 763,68 790,65 r 845,83 900,79 925,79 g 952,72 980,58" />
  </Panel>
);

const RsiDay = () => (
  <Panel x={46} y={91} w={373} h={57} axis={1066} cols={[277, 817]} title="RSI"
    scale={{
      major: [[275, "90"], [308, "80"], [340, "70"], [374, "60"], [406, "50"], [437, "40"]],
      minor: [291, 324, 357, 390, 422],
    }}>
    <Level y={340} from={138} to={1066} c="#900000" />
    <Level y={406} from={138} to={1060} c={C.flat} dash="3 3" />
    <Trace d="r 143,429 160,437 / g 172,437 200,400 226,377 250,370 277,338 r 304,338 g 358,332 r 385,347 412,352 g 438,311
      466,306 493,297 547,292 574,287 628,280 r 655,332 g 682,328 709,315 736,299 763,295 790,295 r 817,347 g 845,340
      871,317 898,310 r 925,328 g 952,311 980,295" />
  </Panel>
);

const IchiDay = () => (
  <Panel x={46} y={150} w={373} h={120} axis={1066} cols={[277, 817]} title="Ichi Moku"
    scale={{ major: [[520, "85"], [650, "80"], [778, "75"]], minor: [457, 585, 715] }}>
    <Curve c="#484848" d="143,580 172,571 196,538 224,526 250,536 277,506" />
    <Cloud end={979} step={27}
      a="143,778 172,785 200,785 277,772 331,770 358,781 385,790 412,785 440,780 466,774 493,755 520,747 547,734 628,712
        655,695 682,690 736,664 763,643 790,631 871,611 925,613 952,599 980,585"
      b="143,765 160,761 331,762 412,763 440,770 466,769 493,767 547,761 601,760 628,757 655,738 682,733 709,722
        736,717 763,704 817,701 845,695 871,693 898,685 925,685 952,655 980,636" />
    <Curve c="#0080ff" w={2} d="200,784 224,780 250,775 277,748 304,744 331,725 358,711 412,712 440,694 466,691 520,652
      547,634 601,616 628,609 709,611 736,600 763,580 790,574 810,565 871,564 898,547 925,545 952,526 980,506" />
    <Curve c="#ff0000" w={2} d="143,770 196,775 250,783 277,780 304,760 331,752 358,741 385,740 412,723 440,713 466,693
      493,691 520,678 547,677 574,652 601,636 628,632 682,612 736,608 763,598 790,592 817,590 845,577 871,575 898,562
      925,547 980,547" />
    <Curve c="#ffff00" d="170,800 196,778 224,758 250,750 277,716 304,715 360,707 412,715 440,667 466,661 493,642
      547,624 574,611 601,607 628,595 655,617 682,612 709,598 736,566 763,559 790,556 817,580 845,570 871,537 898,526
      925,536 952,504 980,462" />
  </Panel>
);

/* ------------------------------------------------------------------ */
/* Annotations on the 60 minute chart                                  */
/* ------------------------------------------------------------------ */

const Note = styled.p`
  position: absolute;
  left: 868px;
  top: 138px;
  width: 102px;
  margin: 0;
  z-index: 6;
  font: bold 16px/19px "Liberation Serif", serif;
  color: #ffff00;
  text-align: center;
  white-space: nowrap;
`;

const Sketch = styled.svg`
  position: absolute;
  left: 980px;
  top: 70px;
  z-index: 6;
  pointer-events: none;
`;

/* ------------------------------------------------------------------ */
/* Broker bar                                                          */
/* ------------------------------------------------------------------ */

const Broker = styled.aside`
  position: absolute;
  left: 1241px;
  top: 667px;
  width: 224px;
  z-index: 8;
  background: #f0f0f0;
  border-top: 1px solid #fff;
  border-right: 1px solid #888;
`;

const BrokerTop = styled.div`
  display: grid;
  grid-template-columns: 15px 1fr;
  height: 28px;
`;

const BrokerText = styled.div`
  position: relative;
  display: flex;
  flex-direction: column;
  font: bold 11px/11px ${CHART_FONT};
  padding-top: 6px;
`;

const BrokerName = styled.strong`
  color: #ff0000;
  white-space: nowrap;
`;

const Version = styled.span`
  align-self: flex-end;
  padding-right: 4px;
  white-space: nowrap;
`;

const BrokerKeys = styled.div`
  display: flex;
  border-top: 1px solid #ff0000;
  padding-top: 1px;
  background: #fff;
`;

const Key = styled.button<{ $w: number; $bg: string }>`
  flex: 0 0 ${(p) => p.$w}px;
  height: 14px;
  padding: 0;
  border: 0;
  border-right: 1px solid #fff;
  background: ${(p) => p.$bg};
  font: bold 11px/14px ${CHART_FONT};
`;

const KEYS: [string, number, string][] = [
  ["AL", 21, "#80ff80"], ["SAT", 24, "#ff8080"], ["ET", 24, "#8080ff"], ["OV", 23, "#ffc080"],
  ["FX", 20, "#ffff00"], ["M", 17, "#d8d8d8"], ["CIK", 29, "#ffffff"],
];

const Bolt = () => (
  <svg width="24" height="28" viewBox="0 0 24 28">
    <path d="M4 1l9 7-3 1 8 7-3 1 8 9-12-8 3-1-9-6 3-1z" fill="#ffff40" stroke="#555" strokeWidth="1" />
    <path d="M12 19l10 8" stroke="#000" strokeWidth="1.6" />
  </svg>
);

/* ------------------------------------------------------------------ */

export default function App() {
  return (
    <>
      <GlobalStyle />
      <Desktop>
        <HiddenDefs width="0" height="0">
          <Gradients />
        </HiddenDefs>

        <Win $x={687} $y={-20} $w={136} $z={1} aria-label="Symbols">
          <SymbolStrip>
            <SymbolCell $bg="#ff9090">T-ADBP</SymbolCell>
            <SymbolCell>0,21</SymbolCell>
            <SymbolCell $color="#ff0000">77,77</SymbolCell>
          </SymbolStrip>
        </Win>

        <Win $x={-7} $y={3} $w={903} $z={2} aria-label="Ticker">
          <Well>
            <TickerTable>
              <colgroup>
                {TICKER.map((c, i) => (
                  <col key={i} width={c.w} />
                ))}
              </colgroup>
              <thead>
                <tr>
                  {TICKER.map((c, i) => (
                    <TickerHead key={i}>{c.h}</TickerHead>
                  ))}
                </tr>
              </thead>
              <tbody>
                <tr>
                  {TICKER.map((c, i) => (
                    <TickerCell key={i} $color={c.color} $bg={c.bg} $name={c.name}>
                      {c.arrow ? <DownArrow /> : c.v}
                    </TickerCell>
                  ))}
                </tr>
              </tbody>
            </TickerTable>
          </Well>
        </Win>

        <Win $x={1160} $y={42} $w={107} $z={2} aria-label="Background window">
          <Well $h={56} />
        </Win>

        <Win $x={1269} $y={-20} $w={400} $z={3} aria-label="Quotes">
          <Well $h={75}>
            <QuoteTable>
              <colgroup>
                {QUOTE_COLS.map((w, i) => (
                  <col key={i} width={w} />
                ))}
              </colgroup>
              <tbody>
                {QUOTES.map((row, r) => (
                  <tr key={r}>
                    {row.map((v, c) => (
                      <QuoteCell key={c} $name={c % 4 === 0} $color={quoteColor(r, c)}>
                        {v}
                      </QuoteCell>
                    ))}
                  </tr>
                ))}
              </tbody>
            </QuoteTable>
          </Well>
        </Win>

        <ChartWindow
          x={-5} y={71} w={404} z={3} tabs={["15", "TL", "LIN", "KHN", "SVD"]}
          crosshair={67} timeW={324} timeX={3} marks={[{ x: 556, t: "11" }]} thumb={55} footH={28}
          main={<Price15 />} subs={[<Macd15 />, <Rsi15 />, <Ichi15 />]}
        />
        <ChartWindow
          x={399} y={59} w={435} z={4} pl={5} pt={3} tabs={["30", "TL", "LIN", "KHN", "SVD"]}
          crosshair={218} timeW={357} timeX={5} marks={[{ x: 169, t: "07" }, { x: 493, t: "08" }, { x: 817, t: "11" }]}
          thumb={99} footH={29}
          main={<Price30 />} subs={[<Macd30 />, <Rsi30 />, <Ichi30 />]}
        />
        <ChartWindow
          x={816} y={57} w={443} z={5} pl={8} tabs={["60", "TL", "LIN", "KHN", "SVD"]}
          crosshair={137} timeW={363} timeX={10}
          marks={[
            { x: 139, t: "04" }, { x: 301, t: "05" }, { x: 463, t: "06" },
            { x: 625, t: "07" }, { x: 787, t: "08" }, { x: 949, t: "11" },
          ]}
          thumb={20} footH={29}
          main={<Price60 />} subs={[<Macd60 />, <Rsi60 />, <Ichi60 />]}
        />
        <ChartWindow
          x={1271} y={73} w={392} z={4} pl={8} tabs={["GUN", "TL", "LIN"]}
          crosshair={208} timeW={311} timeX={45} marks={[{ x: 817, t: "10.10" }]} thumb={72} footH={29}
          main={
            <>
              <PriceDay />
              <TagBox>87,225</TagBox>
            </>
          }
          subs={[<MacdDay />, <RsiDay />, <IchiDay />]}
        />

        <Win $x={912} $y={-12} $w={339} $z={6} aria-label="Depth">
          <Well>
            <DepthBody>
              <DepthTable>
                <colgroup>
                  {DEPTH_COLS.map((w, i) => (
                    <col key={i} width={w} />
                  ))}
                </colgroup>
                <tbody>
                  {DEPTH.map((row, r) => (
                    <DepthRow key={r} $total={r === 2}>
                      {row.map((v, c) => (
                        <DepthCell key={c}>{v}</DepthCell>
                      ))}
                    </DepthRow>
                  ))}
                </tbody>
              </DepthTable>
              <DepthScroll>
                <SysButton aria-label="Scroll down">
                  <Tri d="d" />
                </SysButton>
              </DepthScroll>
            </DepthBody>
            <DepthFoot>
              <DepthFootCell>XXX</DepthFootCell>
              <DepthFootCell $align="right">87,225</DepthFootCell>
              <DepthFootCell $align="right">1 Lot</DepthFootCell>
            </DepthFoot>
          </Well>
        </Win>

        <Note>
          yok daha neler
          <br />
          trendi idi
          <br />
          hatırlarsanız..
        </Note>
        <Sketch width="200" height="90" viewBox="0 0 200 90" aria-hidden="true">
          <circle cx="182" cy="18" r="16" fill="none" stroke="#ff9900" strokeWidth="2" />
          <path d="M2 78.5L42 76" stroke="#ff9900" strokeWidth="3" />
          <path d="M39 68.5l15 6-14 8z" fill="#ff9900" />
        </Sketch>

        <Broker>
          <BrokerTop>
            <Bolt />
            <BrokerText>
              <BrokerName>eBroker Yapı Kredi Yatırım</BrokerName>
              <Version>Sürüm : v2.3.755</Version>
            </BrokerText>
          </BrokerTop>
          <BrokerKeys>
            {KEYS.map(([t, w, bg]) => (
              <Key key={t} $w={w} $bg={bg}>
                {t}
              </Key>
            ))}
          </BrokerKeys>
        </Broker>
      </Desktop>
    </>
  );
}
